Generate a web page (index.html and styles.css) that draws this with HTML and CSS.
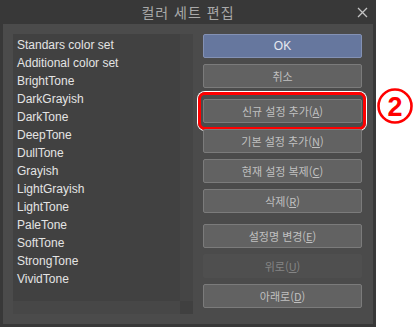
FILE: index.html
```html
<!DOCTYPE html>
<html lang="ko">
<head>
    <meta charset="UTF-8">
    <title>컬러 세트 편집</title>
    <link rel="stylesheet" href="styles.css">
</head>
<body>
    <div class="page">
        <div class="dialog">
            <div class="titlebar">
                <span></span>
                <span class="title">컬러 세트 편집</span>
                <svg class="close" width="11" height="11" viewBox="0 0 11 11">
                    <path d="M1 1 L10 10 M10 1 L1 10" stroke="#c4c4c4" stroke-width="1.3" fill="none"/>
                </svg>
            </div>
            <div class="dialog-body">
                <div class="set-list">
                    <div class="list-main">
                        <ul class="items">
                            <li>Standars color set</li>
                            <li>Additional color set</li>
                            <li>BrightTone</li>
                            <li>DarkGrayish</li>
                            <li>DarkTone</li>
                            <li>DeepTone</li>
                            <li>DullTone</li>
                            <li>Grayish</li>
                            <li>LightGrayish</li>
                            <li>LightTone</li>
                            <li>PaleTone</li>
                            <li>SoftTone</li>
                            <li>StrongTone</li>
                            <li>VividTone</li>
                        </ul>
                        <div class="vscroll"></div>
                    </div>
                    <div class="list-foot">
                        <div class="hscroll"></div>
                        <div class="corner"></div>
                    </div>
                </div>
                <div class="actions">
                    <div class="group">
                        <button class="btn primary">OK</button>
                        <button class="btn">취소</button>
                    </div>
                    <div class="group">
                        <div class="highlight">
                            <button class="btn">신규 설정 추가(<u>A</u>)</button>
                        </div>
                        <button class="btn">기본 설정 추가(<u>N</u>)</button>
                        <button class="btn">현재 설정 복제(<u>C</u>)</button>
                        <button class="btn">삭제(<u>R</u>)</button>
                    </div>
                    <div class="group">
                        <button class="btn">설정명 변경(<u>E</u>)</button>
                        <button class="btn disabled">위로(<u>U</u>)</button>
                        <button class="btn">아래로(<u>D</u>)</button>
                    </div>
                </div>
            </div>
        </div>
        <div class="marker">
            <svg width="38" height="38" viewBox="0 0 38 38">
                <circle cx="19" cy="19" r="16.5" stroke="#ff0000" stroke-width="2.6" fill="none"/>
                <text x="19" y="28.5" text-anchor="middle" class="marker-num">2</text>
            </svg>
        </div>
    </div>
</body>
</html>
```

FILE: styles.css
```css
body {
    margin: 0;
    background-color: #ffffff;
    font-family: "Liberation Sans", Arial, "Noto Sans CJK KR", sans-serif;
}

.page {
    display: flex;
    align-items: flex-start;
}

.dialog {
    width: 376px;
    height: 327px;
    background-color: #383838;
    display: flex;
    flex-direction: column;
}

.titlebar {
    height: 24px;
    display: grid;
    grid-template-columns: 1fr auto 1fr;
    align-items: center;
}

.title {
    font-family: "Noto Sans CJK KR", sans-serif;
    font-size: 14px;
    color: #a9a9a9;
    letter-spacing: 1px;
}

.close {
    justify-self: end;
    margin-right: 8px;
}

.dialog-body {
    margin: 0 3px;
    height: 300px;
    box-sizing: border-box;
    padding: 10px 10px 0 10px;
    background-color: #4b4b4b;
    display: flex;
    gap: 10px;
}

.set-list {
    width: 180px;
    height: 280px;
    display: flex;
    flex-direction: column;
    background-color: #414141;
}

.list-main {
    flex: 1;
    display: flex;
}

.items {
    flex: 1;
    list-style: none;
    margin: 0;
    padding: 2px 0 0 4px;
    font-size: 12px;
    line-height: 18px;
    color: #e4e4e4;
}

.vscroll {
    width: 13px;
    background-color: #454545;
}

.list-foot {
    height: 13px;
    display: flex;
}

.hscroll {
    flex: 1;
    background-color: #474747;
}

.corner {
    width: 13px;
    background-color: #404040;
}

.actions {
    width: 159px;
    display: flex;
    flex-direction: column;
    gap: 11px;
}

.group {
    display: flex;
    flex-direction: column;
    gap: 6px;
}

.btn {
    height: 24px;
    width: 100%;
    box-sizing: border-box;
    border: 1px solid #7b7b7b;
    border-radius: 2px;
    background-color: #626262;
    color: #c0c0c0;
    font-family: "Noto Sans CJK KR", sans-serif;
    font-size: 11px;
    padding: 0;
}

.btn u {
    text-underline-offset: 1px;
}

.btn.primary {
    background-color: #66779e;
    border-color: #8391b4;
    color: #e6e9f0;
    font-family: "Liberation Sans", Arial, sans-serif;
    font-size: 12px;
}

.btn.disabled {
    background-color: #4f4f4f;
    border-color: #4f4f4f;
    color: #858585;
}

.highlight {
    margin: -7px -4px -7px -5px;
    padding: 4px 1px 4px 2px;
    border: 3px solid #ff0000;
    border-radius: 7px;
    box-shadow: 0 0 0 1px #ffffff;
}

.marker {
    margin: 87px 0 0 0;
}

.marker-num {
    font-family: "Liberation Sans", Arial, sans-serif;
    font-size: 27px;
    font-weight: bold;
    fill: #ff0000;
}
```
